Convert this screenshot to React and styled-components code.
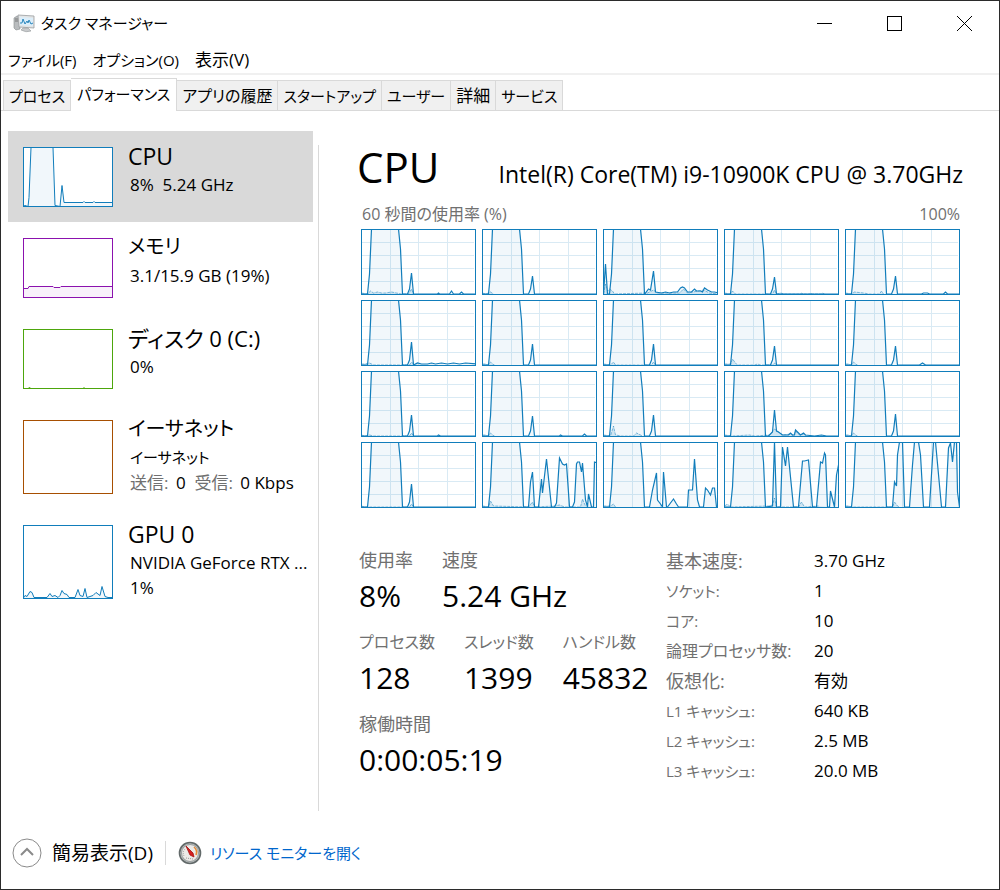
import React from "react";
import styled, { createGlobalStyle } from "styled-components";

const GlobalStyle = createGlobalStyle`
  * {
    box-sizing: border-box;
  }

  body {
    margin: 0;
    background: #fff;
    color: #000;
    font-family: "Open Sans", "Noto Sans CJK JP", sans-serif;
    font-feature-settings: "palt";
    font-size: 17px;
    line-height: 24px;
  }

  button {
    font: inherit;
    font-feature-settings: inherit;
    color: inherit;
    margin: 0;
    padding: 0;
    border: 0;
    background: none;
    white-space: nowrap;
  }
`;

const BASE = "6,65 8,45 10,0 37,0 39,20 41,65";

// one entry per logical processor: time line, kernel time
const spike = (top) => `46,65 48,60 50,${top} 52,65`;
const START = "0,64 3,64 5,65 6,64 8,62 10,64 12,65";

const cores = [
  { line: `${spike(44)} 76,65 77,64 78,65 88,65 90,62 92,65 98,65 100,63 102,65 115,65`, kernel: "0,64 6,65 9,62 12,64 16,63 20,64 24,64 30,63 35,64 40,65 47,65 50,60 52,65" },
  { line: `${spike(47)} 115,65`, kernel: "0,64 3,65 6,64 8,63 11,65" },
  {
    pre: "0,65 2,35 4,65",
    line: "42,64 45,60 47,61 50,42 52,63 58,64 62,63 66,64 70,63 74,63 77,59 79,58 81,59 84,63 88,63 91,60 93,62 97,62 99,63 101,59 104,61 108,63 111,63 115,64",
    kernel: "0,65 2,55 4,62 6,60 9,62 11,65 44,64 50,61 54,64 64,64 76,64 80,60 84,64 100,61 106,64 115,65",
  },
  { line: `${spike(48)} 115,65`, kernel: "0,64 6,65 8,62 11,65 48,65 50,61 52,65 56,64 60,65 76,65 77,64 79,65 85,65 86,64 88,65 97,65 98,64 100,65" },
  { line: `${spike(47)} 76,65 78,64 82,64 84,65 98,65 100,63 102,65 115,65`, kernel: "0,64 6,65 9,63 18,64 24,65 34,65 36,62 38,65" },

  { line: `${spike(42)} 56,63 60,64 66,64 70,63 74,64 80,63 86,64 92,63 98,64 104,63 115,64`, kernel: "0,64 3,64 8,63 12,65 48,65 50,62 52,64" },
  { line: `${spike(44)} 115,65`, kernel: START },
  { line: `${spike(44)} 115,65`, kernel: "0,64 7,65 10,62 12,65 48,65 50,62 52,65" },
  { line: `${spike(46)} 115,65`, kernel: "0,64 6,64 8,59 11,63 13,65 30,65 33,64 36,65 48,65 50,63 52,65" },
  { line: `${spike(46)} 74,65 77,63 80,65 115,65`, kernel: START },

  { line: `${spike(44)} 76,65 77,64 79,65 115,65`, kernel: "0,64 3,65 8,64 12,65 48,65 50,62 52,65" },
  { line: `${spike(45)} 77,65 78,64 80,65 100,65 102,63 104,65 115,65`, kernel: START },
  { line: `${spike(44)} 115,65`, kernel: "0,64 7,65 10,55 12,64 18,65 30,65 33,62 37,64 39,65" },
  { line: "44,65 48,61 50,39 52,60 54,61 58,64 64,64 66,62 68,64 70,64 71,59 73,61 76,64 79,62 81,64 90,65 97,64 102,65 115,65", kernel: "0,64 8,65 25,64 30,65 45,64 50,58 54,61 58,64 66,63 69,65 71,60 75,64 79,63 82,65" },
  { line: `${spike(43)} 115,65`, kernel: START },

  { line: `${spike(42)} 115,65`, kernel: "0,64 3,65 48,65 50,62 52,65" },
  {
    line: "46,65 48,40 50,30 52,65 56,65 59,37 60,51 64,17 69,65 72,65 74,61 77,16 80,22 82,23 84,22 87,65 90,65 92,60 94,22 95,20 97,20 99,30 100,21 103,58 105,65 106,52 109,65 111,65 112,20 115,21",
    kernel: "0,64 6,65 8,59 11,64 46,65 50,60 52,65 72,64 77,63 82,65 98,65 100,57 103,64",
  },
  {
    line: "46,65 49,48 53,31 54,58 57,62 59,65 60,30 63,65 64,65 70,57 73,62 75,65 84,65 85,48 89,48 91,17 94,58 96,65 100,65 102,46 104,48 107,53 109,46 111,46 113,65",
    kernel: "0,64 7,64 10,62 12,65",
  },
  {
    line: "48,64 50,0 52,65 56,65 58,5 61,24 63,5 69,65 74,65 78,19 80,19 84,18 88,65 92,65 96,20 98,21 100,11 101,13 103,65 105,65 106,49 110,65 112,33 115,18",
    kernel: "0,64 3,62 6,65 44,64 48,63 50,56 52,65 74,65 77,60 80,65 94,64",
  },
  {
    line: "47,65 49,40 51,44 52,13 54,0 57,0 59,65 64,65 67,23 69,0 73,0 75,13 78,65 84,65 88,0 90,0 96,65 100,65 103,6 105,1 107,20 109,0 111,0 112,50 114,65",
    kernel: "0,64 3,64 6,65 47,65 49,60 52,64 54,65",
  },
];

const resources = [
  { name: "CPU", size: 23, info: "8%  5.24 GHz", color: "#117dbb", graph: "0,59 2,58 5,59 6,50 8,0 30,0 32,58 37,59 39,38 41,55 60,55 61,54 62,55 70,55 71,54 72,55 90,55", active: true },
  { name: "メモリ", size: 20, info: "3.1/15.9 GB (19%)", color: "#8b12ae", graph: "0,50 5,50 6,48 30,48 31,49 37,49 38,48 90,48" },
  { name: "ディスク 0 (C:)", size: 22, info: "0%", color: "#4da60c", graph: "0,59 5,59 6,58 8,59 60,59 61,58 62,59 90,59" },
  { name: "イーサネット", size: 20, color: "#a74f01", network: true },
  {
    name: "GPU 0",
    size: 23,
    info: "NVIDIA GeForce RTX ...",
    extra: "1%",
    color: "#117dbb",
    tall: true,
    graph: "0,73 2,70 4,71 7,66 9,67 11,72 24,72 27,68 29,71 32,70 35,72 37,70 39,65 41,68 44,69 46,72 52,72 55,64 57,70 60,71 62,63 64,72 70,70 73,67 77,70 79,61 82,71 85,72 90,72",
  },
];

const tabs = [
  { name: "プロセス", size: 15 },
  { name: "パフォーマンス", size: 15 },
  { name: "アプリの履歴", size: 16 },
  { name: "スタートアップ", size: 15 },
  { name: "ユーザー", size: 15 },
  { name: "詳細", size: 17 },
  { name: "サービス", size: 15 },
];

const specs = [
  ["基本速度:", "3.70 GHz", 18],
  ["ソケット:", "1", 15],
  ["コア:", "10", 15],
  ["論理プロセッサ数:", "20", 16],
  ["仮想化:", "有効", 18],
  ["L1 キャッシュ:", "640 KB", 15],
  ["L2 キャッシュ:", "2.5 MB", 15],
  ["L3 キャッシュ:", "20.0 MB", 15],
];

const stats = [
  { size: 18, items: [["使用率", "8%"], ["速度", "5.24 GHz"]] },
  { size: 16, items: [["プロセス数", "128"], ["スレッド数", "1399"], ["ハンドル数", "45832"]] },
  { size: 18, items: [["稼働時間", "0:00:05:19"]] },
];

const CoreChart = ({ core }) => {
  const points = `0,65 ${core.pre || ""} ${BASE} ${core.line}`;
  return (
    <CoreBox viewBox='0 0 115 66' preserveAspectRatio='none'>
      <path
        d='M29.5 0V66M57.5 0V66M86.5 0V66M0 13.5H113M0 26.5H113M0 39.5H113M0 52.5H113'
        stroke='#d9eaf4'
      />
      <g transform='translate(0.5 0)'>
        <polygon points={`${points} 115,66 0,66`} fill='#117dbb' fillOpacity='0.06' />
        <polygon points={`${core.kernel} 115,66 0,66`} fill='#117dbb' fillOpacity='0.15' />
        <polyline points={core.kernel} fill='none' stroke='#117dbb' strokeOpacity='0.5' strokeDasharray='3 1' />
        <polyline points={points} fill='none' stroke='#117dbb' strokeWidth='1.2' />
      </g>
      <rect x='0.5' y='0.5' width='114' height='65' fill='none' stroke='#117dbb' />
    </CoreBox>
  );
};

const Thumb = ({ item }) => {
  const h = item.tall || item.network ? 74 : 60;
  return (
    <svg width='90' height={h} viewBox={`0 0 90 ${h}`}>
      <rect width='90' height={h} fill='#fff' />
      {item.graph && (
        <g>
          <polygon points={`${item.graph} 90,${h} 0,${h}`} fill={item.color} fillOpacity='0.06' />
          <polyline points={item.graph} fill='none' stroke={item.color} transform='translate(0 0.5)' />
        </g>
      )}
      <rect x='0.5' y='0.5' width='89' height={h - 1} fill='none' stroke={item.color} />
    </svg>
  );
};

const AppIcon = () => (
  <svg width='22' height='22' viewBox='0 0 22 22'>
    <path d='M1 6L4 4L7 5V17L3 18L1 16Z' fill='#b9bcbe' stroke='#85898c' strokeWidth='0.6' />
    <path d='M2 7H5M2 9H5' stroke='#666' strokeWidth='0.8' />
    <path d='M5 3L21 4V16L6 15Z' fill='#e3e5e6' stroke='#999da0' strokeWidth='0.8' />
    <path d='M7 5L20 6V14L7 13Z' fill='#dceefa' />
    <path d='M7 11L9 11L10 7L12 12L14 9L15 11L16 8L18 12L20 11' fill='none' stroke='#2b87bd' />
    <path d='M10 16L15 16L18 19Q13 21 8 18Z' fill='#c8cacc' stroke='#94989b' strokeWidth='0.6' />
  </svg>
);

const GaugeIcon = () => (
  <svg width='24' height='24' viewBox='0 0 24 24'>
    <circle cx='12' cy='12' r='10.5' fill='#b9bebe' stroke='#626969' strokeWidth='1.6' />
    <circle cx='12' cy='12' r='8.5' fill='#eceae7' stroke='#989d9d' />
    <path d='M16 6A7 7 0 0 1 18 14' fill='none' stroke='#e88b35' strokeWidth='1.6' />
    <path d='M6 15A6 6 0 0 1 7 8M8 17L15 18' fill='none' stroke='#999' strokeDasharray='1 1' />
    <path d='M8 5L15 12L16 16L12 14Z' fill='#d61f1f' stroke='#a51212' strokeWidth='0.8' />
  </svg>
);

export default function App() {
  return (
    <Window>
      <GlobalStyle />
      <TitleBar>
        <AppIcon />
        <Title>タスク マネージャー</Title>
        <Control aria-label='最小化'>
          <svg width='17' height='17'><path d='M1 8.5H16' stroke='#000' /></svg>
        </Control>
        <Control aria-label='最大化'>
          <svg width='17' height='17'><rect x='1.5' y='1.5' width='14' height='14' fill='none' stroke='#000' /></svg>
        </Control>
        <Control aria-label='閉じる'>
          <svg width='17' height='17'><path d='M1 1L16 16M16 1L1 16' stroke='#000' /></svg>
        </Control>
      </TitleBar>
      <MenuBar>
        <MenuItem $size={15}>ファイル(F)</MenuItem>
        <MenuItem $size={15}>オプション(O)</MenuItem>
        <MenuItem $size={17}>表示(V)</MenuItem>
      </MenuBar>
      <TabBar role='tablist'>
        {tabs.map((tab, i) => (
          <Tab key={tab.name} role='tab' aria-selected={i === 1} $active={i === 1} $size={tab.size}>
            {tab.name}
          </Tab>
        ))}
      </TabBar>

      <Body>
        <Sidebar>
          {resources.map((item) => (
            <Resource key={item.name} $active={item.active}>
              <Thumb item={item} />
              <ResourceText>
                <ResourceName $size={item.size}>{item.name}</ResourceName>
                {item.info && <ResourceInfo>{item.info}</ResourceInfo>}
                {item.extra && <ResourceInfo>{item.extra}</ResourceInfo>}
                {item.network && (
                  <>
                    <ResourceInfo $size={15}>イーサネット</ResourceInfo>
                    <ResourceInfo>
                      <Muted>送信:</Muted> 0  <Muted>受信:</Muted> 0 Kbps
                    </ResourceInfo>
                  </>
                )}
              </ResourceText>
            </Resource>
          ))}
        </Sidebar>

        <Main>
          <Header>
            <h1>CPU</h1>
            <Model>Intel(R) Core(TM) i9-10900K CPU @ 3.70GHz</Model>
          </Header>
          <ChartLabels>
            <span>60 秒間の使用率 (%)</span>
            <span>100%</span>
          </ChartLabels>
          <CoreGrid>
            {cores.map((core, i) => (
              <CoreChart key={i} core={core} />
            ))}
          </CoreGrid>
          <Details>
            <Stats>
              {stats.map((row, i) => (
                <StatRow key={i}>
                  {row.items.map(([label, value]) => (
                    <div key={label}>
                      <StatLabel $size={row.size}>{label}</StatLabel>
                      <StatValue>{value}</StatValue>
                    </div>
                  ))}
                </StatRow>
              ))}
            </Stats>
            <SpecTable>
              <tbody>
                {specs.map(([label, value, size]) => (
                  <tr key={label}>
                    <SpecLabel scope='row' $size={size}>{label}</SpecLabel>
                    <td>{value}</td>
                  </tr>
                ))}
              </tbody>
            </SpecTable>
          </Details>
        </Main>
      </Body>

      <Footer>
        <FewerButton>
          <svg width='30' height='30' viewBox='0 0 30 30' fill='none'>
            <circle cx='15' cy='15' r='14' stroke='#8a8a8a' />
            <path d='M9 17L15 11L21 17' stroke='#8a8a8a' strokeWidth='2' />
          </svg>
          簡易表示(D)
        </FewerButton>
        <MonitorLink href='#resmon'>
          <GaugeIcon />
          リソース モニターを開く
        </MonitorLink>
      </Footer>
    </Window>
  );
}

const Window = styled.div`
  min-height: 100vh;
  display: flex;
  flex-direction: column;
  border: 1px solid #2b2b2b;
`;

const TitleBar = styled.header`
  display: flex;
  align-items: center;
  height: 44px;
  padding-left: 12px;
`;

const Title = styled.span`
  flex: 1;
  margin-left: 6px;
  font-size: 15px;
`;

const Control = styled.button`
  width: 70px;
  height: 44px;
  display: flex;
  align-items: center;
  justify-content: center;
`;

const MenuBar = styled.nav`
  display: flex;
  gap: 16px;
  padding: 3px 7px 1px;
  border-bottom: 2px solid #f0f0f0;
`;

const MenuItem = styled.button`
  height: 24px;
  font-size: ${(props) => props.$size}px;
`;

const TabBar = styled.div`
  display: flex;
  align-items: flex-end;
  height: 36px;
  padding-left: 2px;
  border-bottom: 1px solid #d9d9d9;
`;

const Tab = styled.button`
  height: ${(props) => (props.$active ? "33px" : "30px")};
  padding: ${(props) => (props.$active ? "0 6px 3px" : "0 5px")};
  margin-bottom: ${(props) => (props.$active ? "-1px" : "0")};
  border: 1px solid #d9d9d9;
  border-bottom: 0;
  background: ${(props) => (props.$active ? "#fff" : "#f0f0f0")};
  font-size: ${(props) => props.$size}px;

  & + & {
    border-left: 0;
  }
`;

const Body = styled.div`
  flex: 1;
  display: flex;
  padding: 20px 36px 0 7px;
`;

const Sidebar = styled.aside`
  flex: 0 0 305px;
`;

const Resource = styled.button`
  display: flex;
  align-items: flex-start;
  gap: 15px;
  width: 100%;
  padding: 16px 0 15px 15px;
  text-align: left;
  background: ${(props) => (props.$active ? "#d9d9d9" : "transparent")};

  svg {
    display: block;
    flex: none;
  }
`;

const ResourceText = styled.span`
  display: block;
  min-width: 0;
  height: 60px;
  margin-top: -7px;
`;

const ResourceName = styled.span`
  display: block;
  font-size: ${(props) => props.$size}px;
  line-height: 32px;
`;

const ResourceInfo = styled.span`
  display: block;
  padding-left: 2px;
  font-size: ${(props) => props.$size || 17}px;
  line-height: 25px;
  white-space: pre;
`;

const Muted = styled.span`
  margin-right: 3px;
  color: #707070;
`;

const Main = styled.main`
  flex: 1;
  min-width: 0;
  margin: 14px 0 0 5px;
  padding-left: 38px;
  border-left: 1px solid #d9d9d9;
`;

const Header = styled.div`
  display: flex;
  justify-content: space-between;
  align-items: baseline;
  height: 57px;
  white-space: nowrap;

  h1 {
    margin: 0;
    font-size: 42px;
    font-weight: 400;
    line-height: 44px;
  }
`;

const Model = styled.span`
  font-size: 23px;
`;

const ChartLabels = styled.div`
  display: flex;
  justify-content: space-between;
  padding: 0 3px 0 5px;
  color: #707070;
  font-size: 16px;
`;

const CoreGrid = styled.div`
  display: grid;
  grid-template-columns: repeat(5, 1fr);
  gap: 5px 6px;
  margin-top: 3px;
  padding: 0 3px 0 4px;
`;

const CoreBox = styled.svg`
  display: block;
  width: 100%;
  height: 66px;
`;

const Details = styled.div`
  display: flex;
  margin-top: 40px;
  padding-left: 2px;
`;

const Stats = styled.div`
  flex: 0 0 307px;
`;

const StatRow = styled.div`
  display: flex;
  gap: 29px;
  height: 82px;
  white-space: nowrap;
`;

const StatLabel = styled.div`
  color: #707070;
  font-size: ${(props) => props.$size}px;
`;

const StatValue = styled.div`
  font-size: 30px;
  line-height: 48px;
`;

const SpecTable = styled.table`
  border-collapse: collapse;
  align-self: flex-start;
  margin-top: -2px;
  white-space: nowrap;

  th,
  td {
    height: 30px;
    padding: 0;
    font-weight: 400;
    text-align: left;
  }
`;

const SpecLabel = styled.th`
  width: 148px;
  color: #707070;
  font-size: ${(props) => props.$size}px;
`;

const Footer = styled.footer`
  display: flex;
  align-items: center;
  height: 72px;
  margin-top: 6px;
  padding-left: 11px;
`;

const FewerButton = styled.button`
  display: flex;
  align-items: center;
  gap: 10px;
  padding-right: 12px;
  font-size: 19px;
`;

const MonitorLink = styled.a`
  display: flex;
  align-items: center;
  gap: 8px;
  padding-left: 12px;
  color: #0066cc;
  font-size: 15px;
  text-decoration: none;
  border-left: 1px solid #d9d9d9;
`;
